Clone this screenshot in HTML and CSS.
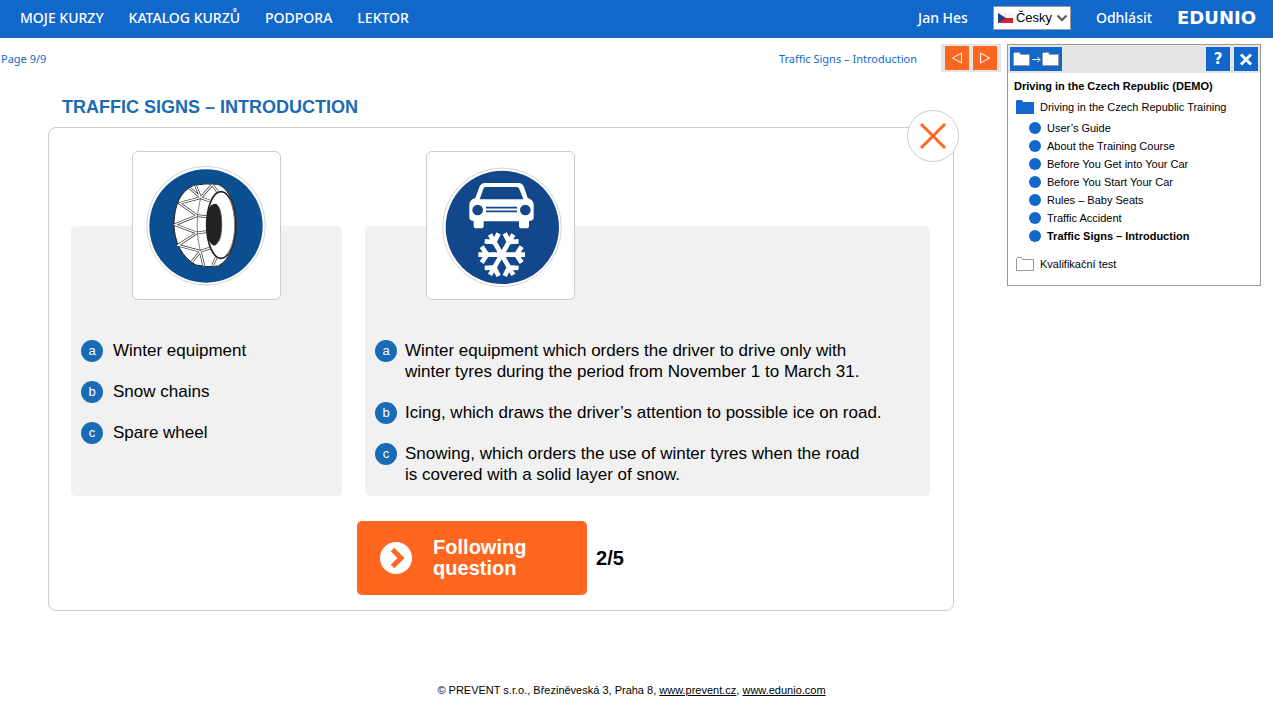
FILE: index.html
```html
<!DOCTYPE html>
<html lang="cs">
<head>
    <meta charset="UTF-8">
    <meta name="viewport" content="width=device-width, initial-scale=1.0">
    <title>Edunio - Traffic Signs – Introduction</title>
    <link rel="stylesheet" href="styles.css">
</head>
<body>
    <header class="topbar">
        <nav class="menu">
            <a href="#">MOJE KURZY</a>
            <a href="#">KATALOG KURZŮ</a>
            <a href="#">PODPORA</a>
            <a href="#">LEKTOR</a>
        </nav>
        <div class="account">
            <a href="#">Jan Hes</a>
            <div class="language">
                <select aria-label="Jazyk">
                    <option>Česky</option>
                    <option>English</option>
                </select>
                <svg class="flag" viewBox="0 0 15 10">
                    <rect width="15" height="10" fill="#f4f4f4"/>
                    <path d="M0 5h15v5H0z" fill="#d8202f"/>
                    <path d="M0 0l8 5-8 5z" fill="#1c4480"/>
                </svg>
                <svg class="arrow" viewBox="0 0 12 8">
                    <path d="M1.500 1.500l4.500 4.500 4.500-4.500" fill="none" stroke="#555" stroke-width="2"/>
                </svg>
            </div>
            <a href="#">Odhlásit</a>
            <a href="#" class="logo">EDUNIO</a>
        </div>
    </header>

    <div class="content">
        <main class="lesson">
            <div class="toolbar">
                <span>Page 9/9</span>
                <span class="lesson-name">Traffic Signs – Introduction</span>
                <div class="pager">
                    <button aria-label="Previous">
                        <svg viewBox="0 0 24 24"><path d="M16.500 7v10L7.500 12z"/></svg>
                    </button>
                    <button aria-label="Next">
                        <svg viewBox="0 0 24 24"><path d="M7.500 7v10l9-5z"/></svg>
                    </button>
                </div>
            </div>

            <h1>TRAFFIC SIGNS – INTRODUCTION</h1>

            <section class="frame">
                <button class="close" aria-label="Close">
                    <svg viewBox="0 0 50 50"><path d="M13 13l24 24M37 13L13 37"/></svg>
                </button>

                <div class="panels">
                    <div class="panel">
                        <div class="sign">
                            <!-- snow chains -->
                            <svg viewBox="40 31 441 441">
                                <circle cx="259" cy="252" r="178" fill="#fff" stroke="#d4d4d4" stroke-width="3"/>
                                <circle cx="259" cy="253" r="170" fill="#0b4f91"/>
                                <path d="M222 131Q258 124 293 128C326 137 350 190 350 247C350 303 333 352 296 373Q262 378 229 370C187 348 163 300 163 246C164 192 181 149 222 131Z" fill="#fff" stroke="#222" stroke-width="3"/>
                                <path d="M210 139L243 168L278 129M243 168L180 185L232 222L166 249L231 274L175 311L242 329L216 361M242 329L252 372M228 132L243 168M278 129L294 151M243 168L270 178M232 222L260 225M231 274L260 270M242 329L274 318M279 370L290 348" fill="none" stroke="#333" stroke-width="8"/>
                                <path d="M210 139L243 168L278 129M243 168L180 185L232 222L166 249L231 274L175 311L242 329L216 361M242 329L252 372M228 132L243 168M278 129L294 151M243 168L270 178M232 222L260 225M231 274L260 270M242 329L274 318M279 370L290 348" fill="none" stroke="#fff" stroke-width="4"/>
                                <path d="M243 168Q222 250 242 329" fill="none" stroke="#444" stroke-width="2"/>
                                <ellipse cx="304" cy="250" rx="43" ry="100" fill="#fff" stroke="#222" stroke-width="5"/>
                                <path d="M330 172C351 218 350 300 324 337" fill="none" stroke="#888" stroke-width="3"/>
                                <path d="M266 202Q274 186 289 186C302 193 307 220 307 249S299 306 284 312Q270 307 265 288Q257 245 266 202Z" fill="#222"/>
                                <path d="M300 201C309 230 308 276 299 299" fill="none" stroke="#666" stroke-width="2"/>
                            </svg>
                        </div>
                        <ul class="answers">
                            <li><button><span class="letter">a</span><span>Winter equipment</span></button></li>
                            <li><button><span class="letter">b</span><span>Snow chains</span></button></li>
                            <li><button><span class="letter">c</span><span>Spare wheel</span></button></li>
                        </ul>
                    </div>

                    <div class="panel wide">
                        <div class="sign">
                            <!-- car above snowflake -->
                            <svg viewBox="36 37 441 441">
                                <circle cx="261" cy="263" r="178" fill="#fff" stroke="#d4d4d4" stroke-width="3"/>
                                <circle cx="262" cy="263" r="170" fill="#12478c"/>
                                <path d="M207 130H311Q323 131 327 142L338 175Q355 180 356 194V235Q355 243 342 244V258Q342 266 334 266H320Q312 266 312 258V245H206V258Q206 266 198 266H184Q176 266 176 258V244Q164 243 163 235V194Q164 180 181 175L194 140Q198 131 207 130Z" fill="#fff"/>
                                <path d="M211 142H305Q311 142 313 148L325 179H194L205 148Q207 142 211 142Z" fill="#12478c"/>
                                <circle cx="188" cy="211" r="16" fill="#12478c"/>
                                <circle cx="331" cy="211" r="16" fill="#12478c"/>
                                <path d="M213 204H306M213 215H306" stroke="#12478c" stroke-width="5"/>
                                <g transform="translate(260 345)" stroke="#fff" stroke-width="14" fill="none">
                                    <path id="arm" d="M0 0H70M44 0L60-24M44 0L60 24"/>
                                    <use href="#arm" transform="rotate(60)"/>
                                    <use href="#arm" transform="rotate(120)"/>
                                    <use href="#arm" transform="rotate(180)"/>
                                    <use href="#arm" transform="rotate(240)"/>
                                    <use href="#arm" transform="rotate(300)"/>
                                </g>
                            </svg>
                        </div>
                        <ul class="answers">
                            <li><button><span class="letter">a</span><span>Winter equipment which orders the driver to drive only with<br>winter tyres during the period from November 1 to March 31.</span></button></li>
                            <li><button><span class="letter">b</span><span>Icing, which draws the driver’s attention to possible ice on road.</span></button></li>
                            <li><button><span class="letter">c</span><span>Snowing, which orders the use of winter tyres when the road<br>is covered with a solid layer of snow.</span></button></li>
                        </ul>
                    </div>
                </div>

                <div class="next-row">
                    <button class="next-btn">
                        <svg viewBox="0 0 32 32">
                            <circle cx="16" cy="16" r="16" fill="#fff"/>
                            <path d="M12.500 7.500l8.500 8.500-8.500 8.500" fill="none" stroke="#ff6720" stroke-width="5"/>
                        </svg>
                        <span>Following<br>question</span>
                    </button>
                    <span class="count">2/5</span>
                </div>
            </section>
        </main>

        <aside class="sidebar">
            <div class="sidebar-head">
                <button class="folders" aria-label="Folders">
                    <svg viewBox="0 0 52 24">
                        <path d="M3.500 18.500V6.500l1-1h5l1 2h9v11zM32.500 18.500V6.500l1-1h5l1 2h9v11z" fill="#fff" stroke="#999"/>
                        <path d="M22 12.500h8M27.500 10l2.500 2.500-2.500 2.500" fill="none" stroke="#fff"/>
                    </svg>
                </button>
                <button class="help">?</button>
                <button aria-label="Close">
                    <svg viewBox="0 0 24 24"><path d="M7 7.500l10 10M17 7.500l-10 10" stroke="#fff" stroke-width="3"/></svg>
                </button>
            </div>
            <h2>Driving in the Czech Republic (DEMO)</h2>
            <a href="#" class="folder">
                <svg viewBox="0 0 18 14"><path d="M0 14V1l1-1h5l1 2h11v12z" fill="#1168ca"/></svg>
                Driving in the Czech Republic Training
            </a>
            <ul class="lessons">
                <li><a href="#">User’s Guide</a></li>
                <li><a href="#">About the Training Course</a></li>
                <li><a href="#">Before You Get into Your Car</a></li>
                <li><a href="#">Before You Start Your Car</a></li>
                <li><a href="#">Rules – Baby Seats</a></li>
                <li><a href="#">Traffic Accident</a></li>
                <li><a href="#" class="active">Traffic Signs – Introduction</a></li>
            </ul>
            <a href="#" class="folder">
                <svg viewBox="0 0 18 14"><path d="M.5 13.500V1.500l1-1h4l1 2h11v11z" fill="#fff" stroke="#999"/></svg>
                Kvalifikační test
            </a>
        </aside>
    </div>

    <footer>© PREVENT s.r.o., Březiněveská 3, Praha 8, <a href="#">www.prevent.cz</a>, <a href="#">www.edunio.com</a></footer>
</body>
</html>
```

FILE: styles.css
```css
* {
    margin: 0;
    padding: 0;
    box-sizing: border-box;
}

body {
    background: #fff;
    color: #000;
    font-family: 'Liberation Sans', Arial, sans-serif;
    font-size: 11px;
}

a {
    color: inherit;
    text-decoration: none;
}

ul {
    list-style: none;
}

button {
    border: none;
    background: none;
    color: inherit;
    font: inherit;
    cursor: pointer;
}

svg {
    display: block;
}

/* top bar */
.topbar {
    display: flex;
    justify-content: space-between;
    height: 38px;
    padding: 0 17px 3px 20px;
    background: #1168ca;
    color: #fff;
    font-family: 'Noto Sans', sans-serif;
    font-size: 14px;
    font-weight: 500;
}

.menu,
.account {
    display: flex;
    align-items: center;
    gap: 25px;
}

.language {
    position: relative;
}

.language select {
    display: block;
    appearance: none;
    width: 78px;
    height: 24px;
    padding-left: 22px;
    border: 1px solid #999;
    border-radius: 0;
    background: #fff;
    color: #000;
    font-family: 'Liberation Sans', Arial, sans-serif;
    font-size: 13px;
}

.flag,
.arrow {
    position: absolute;
    pointer-events: none;
}

.flag {
    top: 7px;
    left: 5px;
    width: 15px;
}

.arrow {
    top: 8px;
    right: 3px;
    width: 12px;
}

.logo {
    font-family: 'DejaVu Sans', sans-serif;
    font-size: 18px;
    font-weight: bold;
}

/* lesson */
.content {
    display: flex;
    align-items: flex-start;
    padding: 6px 12px 0 0;
}

.lesson {
    flex: 1;
}

.toolbar {
    display: flex;
    align-items: center;
    padding: 0 6px 0 1px;
    color: #1168ca;
    font-family: Verdana, 'Noto Sans', sans-serif;
}

.lesson-name {
    margin-left: auto;
}

.pager {
    display: flex;
    gap: 4px;
    margin-left: 24px;
    padding: 2px 4px;
    background: #e5e5e5;
}

.pager button {
    width: 24px;
    height: 24px;
    background: #ff6720;
}

.pager path {
    fill: none;
    stroke: #fff;
}

h1 {
    margin: 23px 0 8px 62px;
    color: #1a6bb5;
    font-size: 18px;
    line-height: 24px;
}

.frame {
    position: relative;
    margin: 0 53px 0 48px;
    padding: 98px 23px 15px 22px;
    border: 1px solid #ccc;
    border-radius: 8px;
}

.close {
    position: absolute;
    top: -18px;
    right: -6px;
    width: 52px;
    height: 52px;
    border: 1px solid #ccc;
    border-radius: 50%;
    background: #fff;
}

.close path {
    stroke: #ff6720;
    stroke-width: 3;
}

.panels {
    display: grid;
    grid-template-columns: 271fr 565fr;
    gap: 23px;
}

.panel {
    padding: 0 10px 11px;
    border-radius: 5px;
    background: #f1f1f1;
}

.sign {
    width: 149px;
    margin: -75px 0 40px 51px;
    border: 1px solid #ccc;
    border-radius: 6px;
    background: #fff;
}

.answers {
    display: flex;
    flex-direction: column;
    gap: 20px;
}

.answers button {
    display: flex;
    gap: 10px;
    font-size: 17px;
    line-height: 21px;
    text-align: left;
}

.wide .answers button {
    gap: 8px;
}

.letter {
    flex: none;
    width: 22px;
    height: 22px;
    margin-bottom: -1px;
    border-radius: 50%;
    background: #1a6bb5;
    color: #fff;
    font-size: 13px;
    text-align: center;
}

.next-row {
    display: flex;
    align-items: center;
    justify-content: center;
    gap: 9px;
    margin-top: 25px;
    padding-right: 20px;
}

.next-btn {
    display: flex;
    align-items: center;
    gap: 21px;
    width: 230px;
    height: 74px;
    padding-left: 23px;
    border-radius: 5px;
    background: #ff6720;
    color: #fff;
    font-size: 20px;
    font-weight: bold;
    line-height: 21px;
    text-align: left;
}

.next-btn svg {
    width: 32px;
}

.count {
    font-size: 20px;
    font-weight: bold;
}

/* course tree */
.sidebar {
    width: 254px;
    padding-bottom: 12px;
    border: 1px solid #999;
    line-height: 18px;
}

.sidebar-head {
    display: flex;
    gap: 4px;
    padding: 2px;
    background: #e5e5e5;
}

.sidebar-head button {
    width: 24px;
    height: 24px;
    background: #1168ca;
    color: #fff;
}

.sidebar-head .folders {
    width: 52px;
    margin-right: auto;
}

.sidebar-head .help {
    font-family: 'DejaVu Sans', sans-serif;
    font-size: 15px;
    font-weight: bold;
}

h2 {
    margin: 4px 6px 3px;
    font-size: 11px;
}

.folder {
    display: flex;
    align-items: center;
    gap: 6px;
    padding-left: 8px;
}

.folder svg {
    width: 18px;
}

.lessons {
    margin: 3px 0 10px 21px;
}

.lessons a {
    display: flex;
    align-items: center;
    gap: 6px;
}

.lessons a::before {
    content: '';
    width: 12px;
    height: 12px;
    border-radius: 50%;
    background: #1168ca;
}

.lessons .active {
    font-weight: bold;
}

footer {
    margin-top: 72px;
    padding-right: 10px;
    line-height: 14px;
    text-align: center;
}

footer a {
    text-decoration: underline;
}
```
